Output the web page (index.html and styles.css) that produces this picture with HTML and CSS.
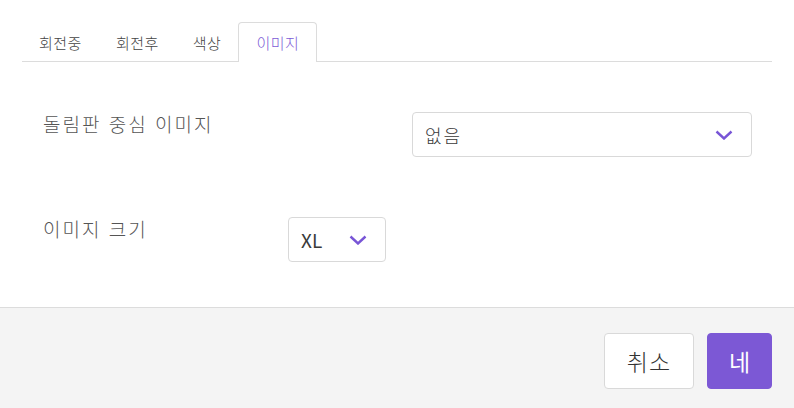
FILE: index.html
```html
<!DOCTYPE html>
<html lang="ko">
<head>
<meta charset="utf-8">
<link rel="stylesheet" href="styles.css">
</head>
<body>
<div class="dialog">
  <div class="tabs-wrap">
    <div class="tabs">
      <div class="tab">회전중</div>
      <div class="tab">회전후</div>
      <div class="tab">색상</div>
      <div class="tab active">이미지</div>
    </div>
  </div>
  <div class="content">
    <div class="row row-center">
      <div class="label label-wide">돌림판 중심 이미지</div>
      <div class="select select-wide">
        <span class="value">없음</span>
        <svg class="chev" width="18" height="10" viewBox="0 0 18 10"><path d="M1.5 1.5 L9 8.5 L16.5 1.5" fill="none" stroke="#7855d6" stroke-width="2.4"/></svg>
      </div>
    </div>
    <div class="row row-size">
      <div class="label label-narrow">이미지 크기</div>
      <div class="select select-small">
        <span class="value latin">XL</span>
        <svg class="chev" width="18" height="10" viewBox="0 0 18 10"><path d="M1.5 1.5 L9 8.5 L16.5 1.5" fill="none" stroke="#7855d6" stroke-width="2.4"/></svg>
      </div>
    </div>
  </div>
  <div class="footer">
    <button class="btn btn-cancel">취소</button>
    <button class="btn btn-ok">네</button>
  </div>
</div>
</body>
</html>
```
FILE: styles.css
```css
html, body {
  margin: 0;
  padding: 0;
  background: #fff;
}
body {
  font-family: "Noto Sans CJK KR", "Noto Sans", sans-serif;
  font-weight: 300;
  color: #444;
  width: 794px;
  height: 408px;
  overflow: hidden;
}
.dialog {
  display: flex;
  flex-direction: column;
  height: 408px;
}
.tabs-wrap {
  padding: 22px 22px 0;
}
.tabs {
  display: flex;
  border-bottom: 1px solid #dcdcdc;
  height: 39px;
}
.tab {
  font-size: 15px;
  line-height: 39px;
  padding: 0 16px;
  color: #444;
  letter-spacing: 0.5px;
  border: 1px solid transparent;
  border-bottom: none;
  border-radius: 4px 4px 0 0;
  margin-bottom: -1px;
}
.tab.active {
  color: #7c5bd6;
  border-color: #dcdcdc;
  background: #fff;
  height: 39px;
  padding: 0 17px;
}
.content {
  flex: 1;
  padding-left: 43px;
}
.row {
  display: flex;
  align-items: flex-start;
}
.row-center {
  margin-top: 50px;
}
.row-size {
  margin-top: 60px;
}
.label {
  font-size: 19px;
  letter-spacing: 2px;
  color: #555;
  line-height: 30px;
  margin-top: -3px;
}
.label-wide {
  width: 369px;
}
.label-narrow {
  width: 245px;
}
.select {
  box-sizing: border-box;
  height: 45px;
  border: 1px solid #d9d9d9;
  border-radius: 4px;
  display: flex;
  align-items: center;
  justify-content: space-between;
  font-size: 18px;
  color: #3a3a3a;
}
.select-wide {
  width: 340px;
  padding: 0 18px 0 12px;
}
.select-wide .value {
  letter-spacing: 2px;
}
.select-small {
  width: 98px;
  padding: 0 18px 0 12px;
}
.value {
  line-height: 1;
}
.value.latin {
  font-weight: 400;
  font-size: 19px;
}
.chev {
  display: block;
}
.footer {
  height: 101px;
  border-top: 1px solid #dcdcdc;
  background: #f4f4f4;
  display: flex;
  justify-content: flex-end;
  align-items: flex-start;
  gap: 13px;
  padding: 25px 22px 0 0;
  box-sizing: border-box;
}
.btn {
  font-family: "Noto Sans CJK KR", "Noto Sans", sans-serif;
  font-weight: 300;
  height: 56px;
  border-radius: 4px;
  font-size: 23px;
  padding: 0;
  cursor: pointer;
}
.btn-cancel {
  width: 90px;
  background: #fff;
  border: 1px solid #d9d9d9;
  color: #333;
  letter-spacing: 1px;
}
.btn-ok {
  width: 65px;
  background: #7c58d5;
  border: 1px solid #7c58d5;
  color: #fff;
  font-weight: 400;
}
```
